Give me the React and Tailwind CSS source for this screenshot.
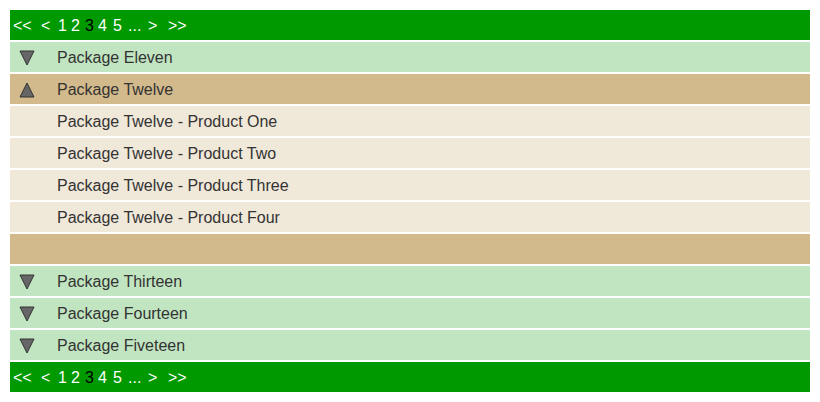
const Pager = () => {
    return (
        <div className="h-[30px] bg-[#009900] flex items-center pl-[3px] pt-[1px] text-white text-[16px]">
            <span className="w-[28px]">&lt;&lt;</span>
            <span className="w-[17px]">&lt;</span>
            <span className="w-[13px]">1</span>
            <span className="w-[14px]">2</span>
            <span className="w-[13px] text-black">3</span>
            <span className="w-[15px]">4</span>
            <span className="w-[15px]">5</span>
            <span className="w-[20px]">...</span>
            <span className="w-[20px]">&gt;</span>
            <span>&gt;&gt;</span>
        </div>
    );
};

const Arrow = ({ up }) => (
    <svg width="16" height="16" viewBox="0 0 16 16">
        {up ? (
            <polygon points="8,1 15,15 1,15" fill="#666666" stroke="#333333" strokeWidth="1" />
        ) : (
            <polygon points="1,1 15,1 8,15" fill="#666666" stroke="#333333" strokeWidth="1" />
        )}
    </svg>
);

const Row = ({ bg, label, arrow, up }) => (
    <div className={`h-[30px] flex items-center pt-[1px] ${bg}`}>
        <div className="w-[47px] pl-[9px] flex items-center">
            {arrow && <Arrow up={up} />}
        </div>
        <span className="text-[16px] text-[#333333]">{label}</span>
    </div>
);

export default function App() {
    return (
        <div className="bg-white min-h-[402px] pt-[10px] px-[10px]" style={{ fontFamily: '"Liberation Sans", Arial, sans-serif' }}>
            <div className="w-[800px] flex flex-col gap-[2px]">
                <Pager />
                <Row bg="bg-[#c1e5c1]" label="Package Eleven" arrow />
                <Row bg="bg-[#d3ba8c]" label="Package Twelve" arrow up />
                <Row bg="bg-[#f0e8d9]" label="Package Twelve - Product One" />
                <Row bg="bg-[#f0e8d9]" label="Package Twelve - Product Two" />
                <Row bg="bg-[#f0e8d9]" label="Package Twelve - Product Three" />
                <Row bg="bg-[#f0e8d9]" label="Package Twelve - Product Four" />
                <Row bg="bg-[#d3ba8c]" label="" />
                <Row bg="bg-[#c1e5c1]" label="Package Thirteen" arrow />
                <Row bg="bg-[#c1e5c1]" label="Package Fourteen" arrow />
                <Row bg="bg-[#c1e5c1]" label="Package Fiveteen" arrow />
                <Pager />
            </div>
        </div>
    );
}
